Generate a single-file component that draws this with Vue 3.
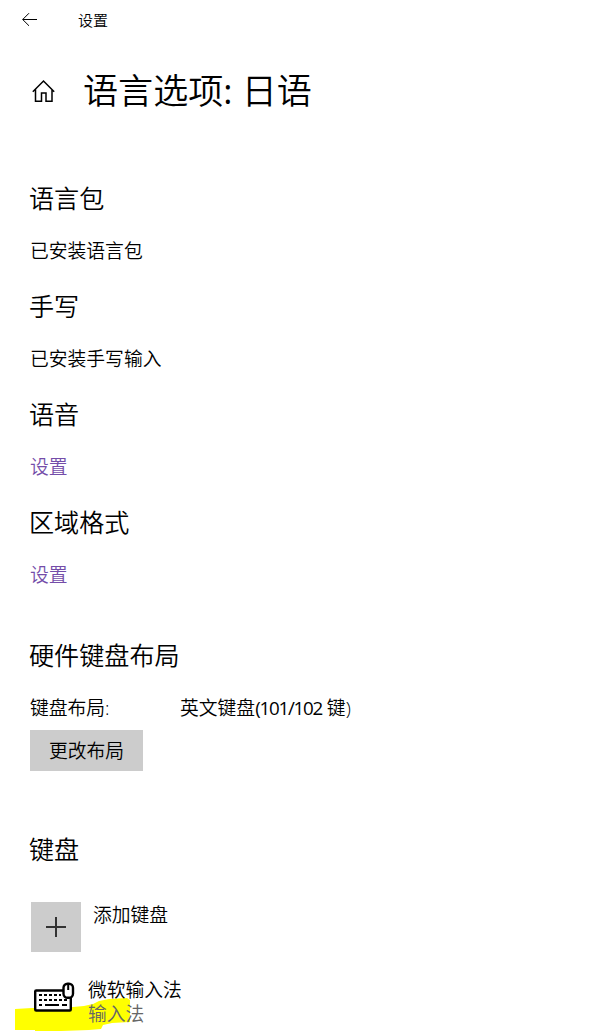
<script setup>
const sections = [
  { title: '语言包', text: '已安装语言包' },
  { title: '手写', text: '已安装手写输入' },
  { title: '语音', link: '设置' },
  { title: '区域格式', link: '设置' }
]
</script>

<template>
  <div class="settings">
    <header class="titlebar">
      <svg class="titlebar__back" width="16" height="14" viewBox="0 0 16 14">
        <path d="M15 6.500H.7M7 .2L.7 6.500l6.300 6.300" />
      </svg>
      <span>设置</span>
    </header>

    <div class="heading">
      <svg class="heading__home" width="24" height="24" viewBox="0 0 24 24">
        <path d="M.8 12.800L11.500 2l10.700 10.800M3.500 10.500V22.200H9.500V14h4.500v8.200H20V10.500" />
      </svg>
      <h1>语言选项<span class="heading__colon">:</span> 日语</h1>
    </div>

    <section v-for="section in sections" :key="section.title" class="section">
      <h2>{{ section.title }}</h2>
      <a v-if="section.link" class="section__link">{{ section.link }}</a>
      <p v-else>{{ section.text }}</p>
    </section>

    <section class="hardware">
      <h2>硬件键盘布局</h2>
      <div class="hardware__row">
        <span class="hardware__label">键盘布局:</span>
        <span>英文键盘<span class="hardware__keys">(101/102</span> 键)</span>
      </div>
      <button class="hardware__button">更改布局</button>
    </section>

    <section class="keyboards">
      <h2>键盘</h2>
      <div class="add">
        <div class="add__tile">
          <svg width="20" height="20" viewBox="0 0 20 20">
            <path d="M10 0v20M0 10h20" />
          </svg>
        </div>
        <span class="add__label">添加键盘</span>
      </div>
      <div class="ime">
        <svg class="ime__marker" width="118" height="34" viewBox="0 0 118 34">
          <path d="M0 11l17-1h30l22-2 9-2 6-3 10-2 18-1 3 2v22l-18 1-9 2-2 4-12 1-28 1H20v-1H0z" />
        </svg>
        <svg class="ime__icon" width="42" height="32" viewBox="0 0 42 32">
          <rect x="2.200" y="8.500" width="35.600" height="20" rx="1" />
          <path class="ime__keys" d="M6 13h22M6 18h28" />
          <path class="ime__space" d="M6 23h3M12 23h14M29 23h5" />
          <rect class="ime__mouse" x="30.500" y="1.800" width="9.500" height="14" rx="4" />
          <path class="ime__wheel" d="M35.200 2v6" />
        </svg>
        <div class="ime__text">
          <span>微软输入法</span>
          <span class="ime__type">输入法</span>
        </div>
      </div>
    </section>
  </div>
</template>

<style>
body {
  margin: 0;
  background: #fff;
}
</style>

<style scoped>
.settings {
  height: 1032px;
  overflow: hidden;
  color: #000;
  font-family: "Open Sans", "Noto Sans CJK SC", sans-serif;
  font-size: 18.8px;
  font-weight: 350;
  line-height: 24px;
}

svg {
  display: block;
  fill: none;
  stroke: #000;
}

h1,
h2,
p {
  margin: 0;
  font-weight: 350;
}

h2 {
  margin-left: -1px;
  font-size: 25.1px;
  line-height: 36px;
}

.titlebar {
  height: 40px;
  padding-left: 22px;
  display: flex;
  align-items: center;
  gap: 40px;
  font-size: 15px;
}

.heading {
  height: 140px;
  padding: 26px 0 0 32px;
  box-sizing: border-box;
  display: flex;
  align-items: flex-start;
  gap: 27px;
}

.heading__home {
  margin-top: 13px;
  stroke-width: 1.5;
}

.heading__colon {
  font-weight: 400;
}

h1 {
  font-size: 35.1px;
  line-height: 48px;
}

.section {
  height: 108px;
  padding-left: 30px;
}

.section h2 {
  margin-bottom: 23px;
}

.section__link {
  color: #744da9;
}

.hardware {
  padding: 25px 0 0 30px;
}

.hardware__row {
  margin: 23px 0 10px;
  display: flex;
}

.hardware__label {
  width: 150px;
}

.hardware__keys {
  font-weight: 400;
  letter-spacing: -1.25px;
}

.hardware__button {
  display: block;
  width: 113px;
  height: 41px;
  padding: 0;
  border: 0;
  background: #ccc;
  color: #000;
  font: inherit;
}

.keyboards {
  padding: 60px 0 0 30px;
}

.add {
  margin: 35px 0 0 1px;
  display: flex;
  gap: 12px;
}

.add__tile {
  width: 50px;
  height: 50px;
  display: grid;
  place-items: center;
  background: #ccc;
}

.add__tile svg {
  stroke: #333;
  stroke-width: 2;
}

.add__label {
  padding-top: 1px;
}

.ime {
  position: relative;
  margin-top: 26px;
  padding-left: 3px;
  display: flex;
  gap: 13px;
}

/* the highlighter stroke runs under the icon and text */
.ime__marker {
  position: absolute;
  left: -15px;
  top: 20px;
  stroke: none;
  fill: #ff0;
}

.ime__icon {
  position: relative;
  margin-top: 4px;
  fill: #fff;
  stroke-width: 2.4;
}

.ime__keys,
.ime__space {
  stroke-width: 2;
}

.ime__keys {
  stroke-dasharray: 3 2;
}

.ime__wheel {
  stroke-width: 2;
}

.ime__text {
  position: relative;
  display: flex;
  flex-direction: column;
}

.ime__type {
  color: #666;
}
</style>
